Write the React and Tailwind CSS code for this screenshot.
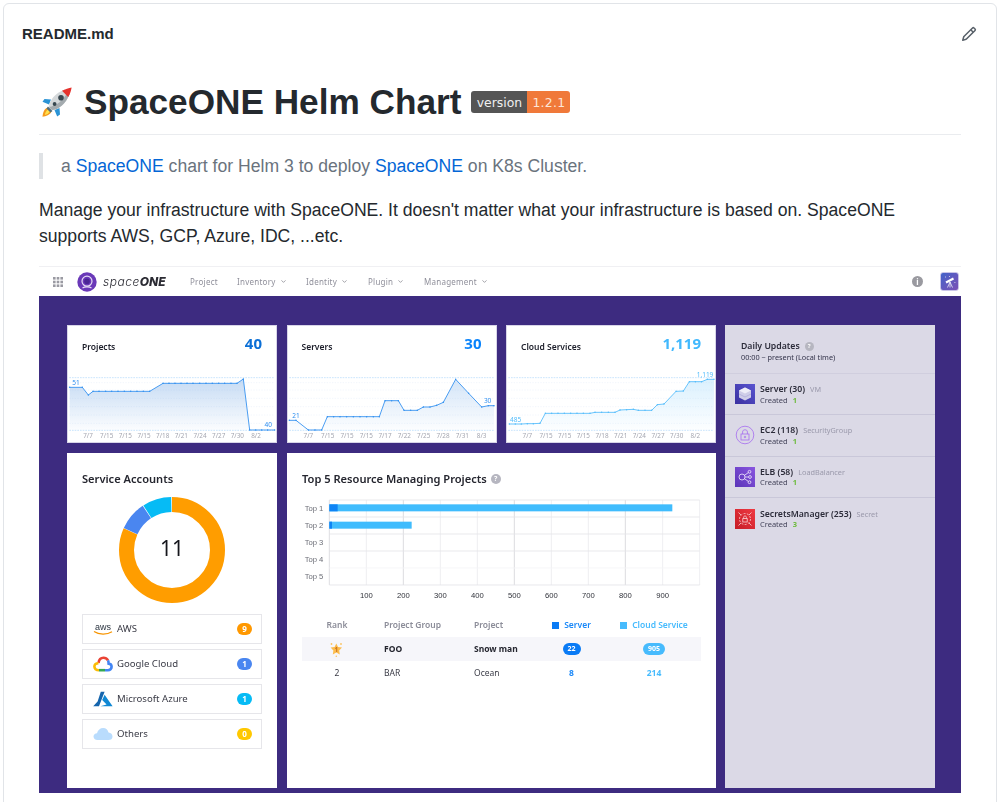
import React from "react";
import { ChevronDown } from "lucide-react";

const noto = { fontFamily: '"Noto Sans", sans-serif' };

function Rocket() {
  return (
    <svg width="32" height="32" viewBox="0 0 32 32" className="shrink-0">
      <path d="M6.5 21.5 C3 23 1.8 27 1.5 30.8 C5 30.4 9 29 10.5 25.5Z" fill="#f59a1d" />
      <path d="M6.8 23.5 C5 25 4 27.5 3.8 29 C5.5 28.7 7.8 27.5 9 25.5Z" fill="#ffe14d" />
      <path d="M10 13.5 L3.5 13 L1.5 15.8 L8 18.5Z" fill="#2a93d5" />
      <path d="M18.5 22 L19 28.5 L16.2 30.5 L13.5 24Z" fill="#2a93d5" />
      <path d="M8 21 C8 15 14 7 24 3.5 L28.5 8 C25 18 17 24 11 24Z" fill="#d4d8da" />
      <path d="M8 21 L11 24 C17 24 25 18 28.5 8 L26.5 6 C23 14 15 20 8 21Z" fill="#a4abaf" />
      <path d="M21 4.8 C24 3 28 1.8 30.6 1.4 C30.2 4 29 8 27.2 11Z" fill="#e5322d" />
      <circle cx="20" cy="11.8" r="2.8" fill="#37474f" />
      <circle cx="13.6" cy="18" r="1.9" fill="#37474f" />
      <path d="M7 20.5 L11.5 25 L9.5 26.5 L5.5 22.5Z" fill="#546e7a" />
    </svg>
  );
}

function Badge() {
  return (
    <span
      className="ml-[10px] flex h-[22px] overflow-hidden rounded-[3px] text-[12.4px] leading-[23px] text-[#f0f0f0]"
      style={{ fontFamily: '"DejaVu Sans", sans-serif', fontWeight: 400 }}
    >
      <span className="w-[56px] bg-[#555555] text-center">version</span>
      <span className="w-[43px] bg-[#f0793a] text-center tracking-[0.3px] text-[#fde6d8]">1.2.1</span>
    </span>
  );
}

function Spark({ vb, pts, color, fill, labels, first, last, lx, ly, fx, fy }) {
  const [x0] = vb;
  const line = pts.map((p) => p.join(",")).join(" ");
  const area = `${pts[0][0]},511 ${line} ${pts[pts.length - 1][0]},511`;
  const id = `g${x0}`;
  return (
    <svg viewBox={`${x0} 330 630 219`} className="block h-[73px] w-[210px] -mt-[3px]">
      <defs>
        <linearGradient id={id} x1="0" y1="0" x2="0" y2="1">
          <stop offset="0" stopColor={fill} stopOpacity="0.32" />
          <stop offset="1" stopColor={fill} stopOpacity="0.02" />
        </linearGradient>
      </defs>
      {[368, 390, 415, 440, 465, 490].map((y) => (
        <line key={y} x1={x0 + 7} x2={x0 + 623} y1={y} y2={y} stroke="#e4edf8" strokeWidth="1.5" strokeDasharray="4 4" />
      ))}
      {[353, 511].map((y) => (
        <line key={y} x1={x0 + 7} x2={x0 + 623} y1={y} y2={y} stroke="#bfe0fb" strokeWidth="2.5" strokeDasharray="5 3" />
      ))}
      <polygon points={area} fill={`url(#${id})`} />
      <polyline points={line} fill="none" stroke={color} strokeWidth="2.6" />
      {pts.map((p, i) => (
        <circle key={i} cx={p[0]} cy={p[1]} r="2.2" fill={color} />
      ))}
      <text x={fx} y={fy} fontSize="19.5" fill={color} style={noto}>{first}</text>
      <text x={lx} y={ly} fontSize="19.5" fill={color} textAnchor="end" style={noto}>{last}</text>
      {labels.map(([t, x], i) => (
        <text key={i} x={x} y="534" fontSize="19" fill="#a4a6b0" textAnchor="middle" style={noto}>{t}</text>
      ))}
    </svg>
  );
}

function StatCard({ title, value, color, children }) {
  return (
    <div className="h-[118px] border border-[#d8d5e8] bg-white" style={noto}>
      <div className="flex h-[47px] items-start justify-between pl-[14px] pr-[14px] pt-[7px]">
        <span className="mt-[8px] text-[8.5px] font-semibold leading-[12px] text-[#1c1e2a]">{title}</span>
        <span className="text-[15px] font-bold leading-[20px]" style={{ color }}>{value}</span>
      </div>
      <div className="-ml-px">{children}</div>
    </div>
  );
}

function Donut() {
  const r = 45.5;
  const circ = 2 * Math.PI * r;
  const seg = (from, n, color) => (
    <circle
      cx="55" cy="55" r={r} fill="none" stroke={color} strokeWidth="15"
      strokeDasharray={`${(n / 11) * circ - 0.7} ${circ}`}
      transform={`rotate(${-90 + (from / 11) * 360} 55 55)`}
    />
  );
  return (
    <svg width="110" height="110" viewBox="0 0 110 110" className="mx-auto block">
      {seg(0, 9, "#ff9d00")}
      {seg(9, 1, "#4a86f0")}
      {seg(10, 1, "#06bbf5")}
      <text x="55" y="61" fontSize="21" textAnchor="middle" fill="#15161c" style={noto}>11</text>
    </svg>
  );
}

function AwsLogo() {
  return (
    <svg width="20" height="14" viewBox="0 0 20 14">
      <text x="10" y="8" textAnchor="middle" fontSize="9" fill="#2b3440" style={{ fontFamily: '"Liberation Sans", sans-serif' }}>aws</text>
      <path d="M1 9.6 C6 13 14 13 19 9.8" fill="none" stroke="#f79400" strokeWidth="1.2" />
    </svg>
  );
}
function GoogleLogo() {
  return (
    <svg width="20" height="16" viewBox="0 0 20 16" fill="none" strokeWidth="2.6">
      <path d="M5.5 7 C6 3.5 8 1.8 10.5 1.8 C12.6 1.8 14 2.8 15 4.4" stroke="#ea4335" />
      <path d="M15 4.4 C15.5 5.3 15.6 6.3 15.6 7.6 C17.6 7.8 18.6 9.3 18.6 10.8 C18.6 12.8 17 14.2 15 14.2 L12 14.2" stroke="#4285f4" />
      <path d="M12 14.2 L6 14.2" stroke="#34a853" />
      <path d="M6 14.2 C3 14.2 1.4 12.6 1.4 10.6 C1.4 8.6 3 7.2 5.5 7.2" stroke="#fbbc05" />
    </svg>
  );
}
function AzureLogo() {
  return (
    <svg width="20" height="16" viewBox="0 0 20 16">
      <path d="M7.8 0.8 L11.6 0.8 L6 15.2 L0.2 15.2 L4.6 10.5Z" fill="#1565ad" />
      <path d="M11.6 3.8 L19.6 15.2 L7.4 15.2 L13.6 13.6 L9.2 9Z" fill="#0f88d4" />
    </svg>
  );
}
function OtherLogo() {
  return (
    <svg width="20" height="14" viewBox="0 0 20 14">
      <path d="M4.5 13 C2 13 0.5 11.5 0.5 9.6 C0.5 7.6 2 6.4 4 6.3 C4.8 3 7.2 1 10.2 1 C13 1 15 3 15.5 5.6 C18 5.8 19.5 7.4 19.5 9.4 C19.5 11.6 18 13 15.5 13Z" fill="#b9dcfd" />
    </svg>
  );
}

function Provider({ icon, name, count, color }) {
  return (
    <div className="flex h-[30px] items-center border border-[#e6e6ea] pl-[10px] pr-[9px]">
      <span className="flex w-[24px] shrink-0 justify-start">{icon}</span>
      <span className="mt-px text-[9.6px] text-[#3a3b46]">{name}</span>
      <span
        className="ml-auto flex h-[12px] w-[15px] items-center justify-center rounded-full text-[8px] font-bold text-white"
        style={{ backgroundColor: color }}
      >
        {count}
      </span>
    </div>
  );
}

function Help({ size = 10 }) {
  return (
    <span
      className="inline-flex items-center justify-center rounded-full bg-[#b6b6c0] font-bold text-white"
      style={{ width: size, height: size, fontSize: size - 3 }}
    >
      ?
    </span>
  );
}

function BarChart() {
  const vs = [244, 355, 466, 577, 688, 799, 910, 1021, 1133, 1244];
  return (
    <svg viewBox="51 140 1196 330" className="block h-[110px] w-[398.67px]">
      {vs.map((x, i) => (
        <line key={x} x1={x} x2={x} y1="152" y2="407" stroke={i % 3 === 1 ? "#d5d5da" : "#eaeaee"} strokeWidth="2.5" />
      ))}
      <line x1="133" x2="133" y1="152" y2="407" stroke="#d8d8dc" strokeWidth="2.5" />
      {[152, 203, 254, 305, 356, 407].map((y) => (
        <line key={y} x1="133" x2="1244" y1={y} y2={y} stroke={y === 356 ? "#f4f4f6" : "#e4e4e8"} strokeWidth="2.5" />
      ))}
      <rect x="133" y="165" width="1029" height="21" fill="#40bcfd" />
      <rect x="133" y="165" width="25" height="21" fill="#0f84f5" />
      <rect x="133" y="217" width="247" height="21" fill="#40bcfd" />
      <rect x="133" y="217" width="8" height="21" fill="#0f84f5" />
      {["Top 1", "Top 2", "Top 3", "Top 4", "Top 5"].map((t, i) => (
        <text key={t} x="87" y={184 + i * 51.5} textAnchor="middle" fontSize="23" fill="#6d6f78" style={{ fontFamily: '"Liberation Sans", sans-serif' }}>{t}</text>
      ))}
      {vs.slice(0, 9).map((x, i) => (
        <text key={x} x={x} y="446" textAnchor="middle" fontSize="23" fill="#30323a" style={{ fontFamily: '"Liberation Sans", sans-serif' }}>{(i + 1) * 100}</text>
      ))}
    </svg>
  );
}

function Crown() {
  return (
    <svg width="15" height="15" viewBox="0 0 15 15" className="ml-[27px]">
      <circle cx="2.5" cy="2" r="0.9" fill="#fbc35e" />
      <circle cx="12" cy="2" r="0.9" fill="#fbc35e" />
      <circle cx="7.3" cy="14.2" r="0.8" fill="#fbc35e" />
      <path d="M7.3 1.5 L9 5 L13 5.5 L10.2 8.4 L10.8 12.6 L7.3 10.6 L3.8 12.6 L4.4 8.4 L1.6 5.5 L5.6 5Z" fill="#fcbc4c" />
      <text x="7.3" y="9.6" fontSize="6.5" fontWeight="700" textAnchor="middle" fill="#c9701f" style={noto}>1</text>
    </svg>
  );
}

function ServerIcon() {
  return (
    <svg width="20" height="20" viewBox="0 0 20 20" className="shrink-0">
      <defs>
        <linearGradient id="srv" x1="0" y1="1" x2="1" y2="0">
          <stop offset="0" stopColor="#3a2fa0" />
          <stop offset="1" stopColor="#5a55d0" />
        </linearGradient>
      </defs>
      <rect width="20" height="20" fill="url(#srv)" />
      <path d="M10 3.5 L16 6.5 V13.5 L10 16.5 L4 13.5 V6.5Z" fill="#cfcde8" />
      <path d="M4 6.5 L10 9.5 L16 6.5 L10 3.5Z" fill="#eeedf8" />
      <path d="M4 10 L10 13 L16 10" stroke="#aaa6d8" strokeWidth="0.7" fill="none" />
    </svg>
  );
}
function LockIcon() {
  return (
    <svg width="20" height="20" viewBox="0 0 20 20" fill="none" stroke="#a66cf0" strokeWidth="0.8" className="shrink-0">
      <circle cx="10" cy="10" r="8.8" />
      <rect x="6" y="9" width="8" height="6" />
      <path d="M7.6 9 V7 C7.6 5.4 8.6 4.8 10 4.8 C11.4 4.8 12.4 5.4 12.4 7 V9" />
      <circle cx="10" cy="12" r="0.8" />
    </svg>
  );
}
function ElbIcon() {
  return (
    <svg width="20" height="20" viewBox="0 0 20 20" className="shrink-0">
      <defs>
        <linearGradient id="elb" x1="0" y1="1" x2="1" y2="0">
          <stop offset="0" stopColor="#5a34b8" />
          <stop offset="1" stopColor="#8a56e0" />
        </linearGradient>
      </defs>
      <rect width="20" height="20" fill="url(#elb)" />
      <g fill="none" stroke="#f2ecfc" strokeWidth="0.8">
        <circle cx="7" cy="10" r="3" />
        <circle cx="14.5" cy="4.8" r="1.4" />
        <circle cx="15" cy="10" r="1.4" />
        <circle cx="14.5" cy="15.2" r="1.4" />
        <path d="M9.4 8.4 L13.3 5.6 M10 10 H13.6 M9.4 11.6 L13.3 14.4" />
      </g>
    </svg>
  );
}
function SecretIcon() {
  return (
    <svg width="20" height="20" viewBox="0 0 20 20" className="shrink-0">
      <defs>
        <linearGradient id="sec" x1="0" y1="1" x2="1" y2="0">
          <stop offset="0" stopColor="#c61b26" />
          <stop offset="1" stopColor="#ef3a42" />
        </linearGradient>
      </defs>
      <rect width="20" height="20" fill="url(#sec)" />
      <g fill="none" stroke="#f9d5d7" strokeWidth="0.8">
        <circle cx="10" cy="10" r="5.5" strokeDasharray="2 1.4" />
        <rect x="7.8" y="9.6" width="4.4" height="3.4" />
        <path d="M8.6 9.6 V8.4 C8.6 7.4 9.2 7 10 7 C10.8 7 11.4 7.4 11.4 8.4 V9.6" />
        <path d="M3.5 3.5 L6 6 M16.5 3.5 L14 6 M3.5 16.5 L6 14 M16.5 16.5 L14 14" />
      </g>
    </svg>
  );
}

function Update({ icon, name, kind, count, last }) {
  return (
    <div className={`flex h-[41.33px] items-center gap-[5px] pl-[10px] ${last ? "" : "border-b border-[#c9c7d9]"}`}>
      {icon}
      <div className="mt-px leading-[10.5px]">
        <div className="flex items-baseline gap-[5px]">
          <span className="text-[8.7px] font-semibold text-[#2c2c3a]">{name}</span>
          <span className="text-[7.3px] text-[#9a99ab]">{kind}</span>
        </div>
        <div className="text-[7.5px] text-[#44445a]">
          Created <span className="ml-[3px] font-bold text-[#6cbb3c]">{count}</span>
        </div>
      </div>
    </div>
  );
}

const navItems = [
  ["Project", false, "w-[47px]"],
  ["Inventory", true, "w-[69px]"],
  ["Identity", true, "w-[62px]"],
  ["Plugin", true, "w-[56px]"],
  ["Management", true, "w-[64px]"],
];

function Screenshot() {
  return (
    <div className="mt-[17px] w-[922px] border-t border-[#f0f0f3] blur-[0.4px]" style={noto}>
      <div className="flex h-[29px] items-center bg-white">
        <svg width="10" height="10" viewBox="0 0 10 10" className="ml-[14px]" fill="#9a9aa2">
          {[0, 3.7, 7.4].flatMap((x) => [0, 3.7, 7.4].map((y) => <rect key={`${x}${y}`} x={x} y={y} width="2.6" height="2.6" />))}
        </svg>
        <svg width="20" height="20" viewBox="0 0 20 20" className="ml-[14px]">
          <circle cx="10" cy="10" r="9.7" fill="#6a39b8" />
          <circle cx="10" cy="9.2" r="5" fill="none" stroke="#e6dcf5" strokeWidth="1.2" />
          <circle cx="10" cy="9.2" r="2.8" fill="#4a2594" />
          <path d="M5.5 16 C7.5 14.6 12.5 14.6 14.5 16" fill="none" stroke="#e6dcf5" strokeWidth="1.2" />
        </svg>
        <span className="ml-[6px] w-[87px] text-[12px] italic leading-none text-[#2b2b33]" style={{ fontFamily: 'Inter, sans-serif' }}>
          <span className="font-light tracking-[0.5px]">space</span>
          <span className="font-extrabold">ONE</span>
        </span>
        {navItems.map(([t, chev, w]) => (
          <span key={t} className={`flex ${w} shrink-0 items-center whitespace-nowrap text-[8px] tracking-[0.25px] text-[#8f8f9a]`}>
            {t}
            {chev && <ChevronDown size={7} strokeWidth={2.2} className="ml-[4px] text-[#70707a]" />}
          </span>
        ))}
        <span className="ml-auto flex h-[11px] w-[11px] items-center justify-center rounded-full bg-[#9a9aa0] text-[8px] font-bold leading-none text-white">i</span>
        <span className="ml-[17px] mr-[2px] flex h-[19px] w-[19px] items-center justify-center rounded-[3px] border border-[#c9c4e8] bg-linear-to-br from-[#3f62c9] to-[#7a4fb5]">
          <svg width="14" height="14" viewBox="0 0 14 14" fill="none" stroke="#fff">
            <path d="M3 7.5 L10.5 3.5" strokeWidth="2" />
            <path d="M7 7 L4.5 12.5 M7 7 L9.5 12.5 M7 7 V12.5" strokeWidth="0.7" />
            <path d="M2 2 h0.8 M11.5 7.5 h0.8 M6 1.5 h0.8" strokeWidth="0.8" />
          </svg>
        </span>
      </div>
      <div className="flex gap-[9px] bg-[#3d2b80] pb-[5px] pl-[28px] pt-[29px]">
        <div className="w-[649px]">
          <div className="grid grid-cols-3 gap-x-[9.5px]">
            <StatCard title="Projects" value="40" color="#0b6fd6">
              <Spark
                vb={[112]}
                color="#2f8ff0" fill="#4d8fdc"
                pts={[[120,382],[158,382],[176,405],[190,394],[208,394],[228,394],[246,394],[265,394],[284,394],[303,394],[322,394],[341,394],[360,394],[400,370],[418,370],[436,370],[454,370],[472,370],[490,370],[510,370],[529,370],[548,370],[567,370],[585,370],[604,370],[622,370],[641,357],[660,510],[678,510],[696,510],[714,510],[735,510]]}
                first="51" fx={128} fy={374} last="40" lx={727} ly={502}
                labels={[["7/7",175],["7/15",231],["7/15",287],["7/15",343],["7/18",399],["7/21",455],["7/24",511],["7/27",567],["7/30",623],["8/2",679]]}
              />
            </StatCard>
            <StatCard title="Servers" value="30" color="#0a84fb">
              <Spark
                vb={[771]}
                color="#2f8ff0" fill="#78aee8"
                pts={[[778,481],[798,481],[835,510],[855,510],[875,510],[892,470],[911,470],[930,470],[950,470],[970,470],[990,470],[1010,470],[1030,470],[1048,470],[1065,422],[1085,422],[1105,422],[1122,451],[1142,451],[1162,451],[1180,441],[1200,441],[1220,436],[1240,427],[1277,358],[1316,400],[1355,441],[1375,437],[1392,437]]}
                first="21" fx={787} fy={473} last="30" lx={1384} ly={430}
                labels={[["7/7",835],["7/15",893],["7/15",951],["7/15",1009],["7/17",1065],["7/22",1123],["7/25",1181],["7/28",1239],["7/31",1297],["8/3",1355]]}
              />
            </StatCard>
            <StatCard title="Cloud Services" value="1,119" color="#41b8fd">
              <Spark
                vb={[18]}
                color="#52bcfb" fill="#8ed2fb"
                pts={[[28,492],[46,492],[64,492],[82,491],[100,491],[120,490],[136,460],[155,460],[174,460],[193,460],[212,460],[231,460],[250,460],[270,460],[285,457],[305,457],[325,457],[345,457],[360,450],[380,449],[400,448],[415,451],[435,451],[455,451],[472,434],[492,432],[528,394],[550,393],[568,365],[586,365],[605,365],[622,358],[642,358]]}
                first="485" fx={30} fy={485} last="1,119" lx={640} ly={351}
                labels={[["7/7",82],["7/15",138],["7/15",194],["7/15",250],["7/18",306],["7/21",362],["7/24",418],["7/27",474],["7/30",530],["8/2",586]]}
              />
            </StatCard>
          </div>
          <div className="mt-[10px] flex h-[335px] gap-[10px]">
            <div className="w-[210px] bg-white px-[15px] pt-[19px]">
              <div className="text-[11.1px] font-semibold leading-[14px] text-[#25262f]">Service Accounts</div>
              <div className="mt-[9px]"><Donut /></div>
              <div className="mt-[9px] flex flex-col gap-[5px]">
                <Provider icon={<AwsLogo />} name="AWS" count="9" color="#ff9800" />
                <Provider icon={<GoogleLogo />} name="Google Cloud" count="1" color="#4a86f0" />
                <Provider icon={<AzureLogo />} name="Microsoft Azure" count="1" color="#06bbf5" />
                <Provider icon={<OtherLogo />} name="Others" count="0" color="#ffc800" />
              </div>
            </div>
            <div className="w-[429px] bg-white px-[15px] pt-[19px]">
              <div className="flex items-center gap-[4px] text-[11.1px] font-semibold leading-[14px] text-[#25262f]">
                Top 5 Resource Managing Projects <Help />
              </div>
              <div className="mt-[10px]"><BarChart /></div>
              <div className="w-[398.67px] text-[8.5px]">
                <div className="mt-[12px] grid h-[15px] grid-cols-[82px_90px_56px_83px_82px] items-center font-semibold text-[#8b8c98]">
                  <span className="w-[70px] text-center">Rank</span>
                  <span>Project Group</span>
                  <span>Project</span>
                  <span className="flex items-center justify-center gap-[5px] text-[#1a88f8]"><i className="h-[7px] w-[7px] bg-[#0a7bf5]" />Server</span>
                  <span className="flex items-center justify-center gap-[5px] whitespace-nowrap text-[#47bbfd]"><i className="h-[7px] w-[7px] shrink-0 bg-[#47bbfd]" />Cloud Service</span>
                </div>
                <div className="mt-[4px] grid h-[24px] grid-cols-[82px_90px_56px_83px_82px] items-center bg-[#f6f6fa] font-bold text-[#25262f]">
                  <Crown />
                  <span>FOO</span>
                  <span className="whitespace-nowrap">Snow man</span>
                  <span className="mx-auto flex h-[12px] w-[18px] items-center justify-center rounded-full bg-[#0a7bf5] text-[7px] text-white">22</span>
                  <span className="mx-auto flex h-[12px] w-[22px] items-center justify-center rounded-full bg-[#47bbfd] text-[7px] text-white">905</span>
                </div>
                <div className="grid h-[24px] grid-cols-[82px_90px_56px_83px_82px] items-center text-[#3a3b46]">
                  <span className="w-[70px] text-center">2</span>
                  <span>BAR</span>
                  <span>Ocean</span>
                  <span className="text-center font-bold text-[#1a88f8]">8</span>
                  <span className="text-center font-bold text-[#47bbfd]">214</span>
                </div>
              </div>
            </div>
          </div>
        </div>
        <div className="w-[210px] bg-[#dbd9e6]">
          <div className="h-[49px] border-b border-[#d0cede] pl-[16px] pt-[15px]">
            <div className="flex items-center gap-[5px] text-[8.7px] font-semibold leading-[12px] text-[#2c2c3a]">
              Daily Updates <Help size={9} />
            </div>
            <div className="text-[7.3px] leading-[10px] text-[#33334a]">00:00 ~ present (Local time)</div>
          </div>
          <Update icon={<ServerIcon />} name="Server (30)" kind="VM" count="1" />
          <Update icon={<LockIcon />} name="EC2 (118)" kind="SecurityGroup" count="1" />
          <Update icon={<ElbIcon />} name="ELB (58)" kind="LoadBalancer" count="1" />
          <Update icon={<SecretIcon />} name="SecretsManager (253)" kind="Secret" count="3" last />
        </div>
      </div>
    </div>
  );
}

export default function App() {
  return (
    <div className="h-[802px] overflow-hidden bg-white px-[3px] pt-[3px]" style={{ fontFamily: '"Liberation Sans", Arial, sans-serif' }}>
      <div className="h-[900px] rounded-md border border-[#e1e4e8]">
        <div className="flex h-[60px] items-center justify-between pl-[18px] pr-[19px]">
          <span className="text-[15px] font-bold text-[#24292e]">README.md</span>
          <svg width="16" height="16" viewBox="0 0 16 16" fill="#586069">
            <path d="M11.013 1.427a1.75 1.75 0 012.474 0l1.086 1.086a1.75 1.75 0 010 2.474l-8.61 8.61c-.21.21-.47.364-.756.445l-3.251.93a.75.75 0 01-.927-.928l.929-3.25a1.75 1.75 0 01.445-.758l8.61-8.61zm1.414 1.06a.25.25 0 00-.354 0L10.811 3.75l1.439 1.44 1.263-1.263a.25.25 0 000-.354l-1.086-1.086zM11.189 6.25L9.75 4.81l-6.286 6.287a.25.25 0 00-.064.108l-.558 1.953 1.953-.558a.249.249 0 00.108-.064l6.286-6.286z" />
          </svg>
        </div>
        <div className="px-[35px] pt-[15px]">
          <div className="flex h-[46px] items-center pl-[2px]">
            <Rocket />
            <h1 className="ml-[11px] text-[35.2px] font-bold leading-[46px] text-[#24292e]">SpaceONE Helm Chart</h1>
            <Badge />
          </div>
          <div className="mt-[9px] border-t border-[#eaecef]" />
          <div className="mt-[18px] h-[26px] border-l-4 border-[#dfe2e5] pl-[18px] text-[17.6px] leading-[26px] text-[#6a737d]">
            a <a className="text-[#0366d6]">SpaceONE</a> chart for Helm 3 to deploy <a className="text-[#0366d6]">SpaceONE</a> on K8s Cluster.
          </div>
          <p className="mt-[18px] w-[922px] text-[17.6px] leading-[26px] text-[#24292e]">
            Manage your infrastructure with SpaceONE. It doesn't matter what your infrastructure is based on. SpaceONE supports AWS, GCP, Azure, IDC, ...etc.
          </p>
          <Screenshot />
        </div>
      </div>
    </div>
  );
}
